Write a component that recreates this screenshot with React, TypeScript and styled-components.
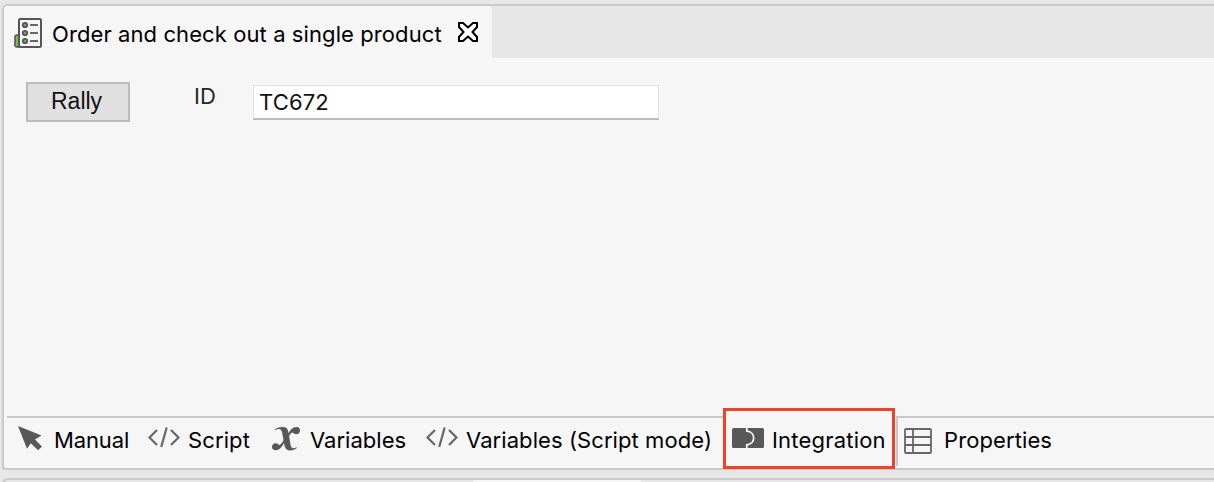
import React from "react";
import styled, { createGlobalStyle } from "styled-components";

const GlobalStyle = createGlobalStyle`
  * { box-sizing: border-box; }
  body {
    margin: 0;
    background: #e7e7e7;
    color: #000;
    font-family: Inter, "Liberation Sans", sans-serif;
    font-size: 22px;
    overflow: hidden;
  }
`;

const Workbench = styled.div`
  display: flex;
  flex-direction: column;
  gap: 8px;
  width: 1214px;
  height: 482px;
  padding: 4px 0 0 2px;
  overflow: hidden;
`;

const Panel = styled.main`
  display: flex;
  flex-direction: column;
  flex: none;
  height: 466px;
  background: #f6f6f6;
  border: 2px solid #c9c9c9;
  border-right: 0;
  border-radius: 6px 0 0 4px;
`;

const Header = styled.header`
  display: flex;
  height: 52px;
  background: #e7e7e7;
  border-top-left-radius: 4px;
`;

const EditorTab = styled.div`
  display: flex;
  align-items: flex-start;
  width: 488px;
  padding-left: 10px;
  background: #f6f6f6;
  border-radius: 4px 4px 0 0;
`;

const Text = styled.span<{ $width: number; $spacing: number }>`
  flex: none;
  width: ${(p) => p.$width}px;
  line-height: 28px;
  letter-spacing: ${(p) => p.$spacing}px;
  white-space: nowrap;
`;

const Title = styled(Text)`
  margin: 14px 16px 0 10px;
`;

const Icon = styled.svg<{ $top: number }>`
  display: block;
  flex: none;
  margin-top: ${(p) => p.$top}px;
`;

const Form = styled.section`
  display: flex;
  align-items: flex-start;
  flex: 1;
  padding: 24px 0 0 22px;
`;

const RallyButton = styled.button`
  width: 104px;
  height: 40px;
  padding: 0 0 2px 23px;
  border: 2px solid #bcbcbc;
  background: #e0e0e0;
  color: #111;
  font: 23px/34px "Liberation Sans", Arial, sans-serif;
  text-align: left;
`;

const FieldLabel = styled.label`
  width: 59px;
  margin: 0 0 0 64px;
  color: #262626;
  line-height: 28px;
`;

const Field = styled.input`
  width: 406px;
  height: 35px;
  margin-top: 3px;
  padding: 0 5px;
  border: 1px solid #dfdfdf;
  border-bottom: 2px solid #bdbdbd;
  border-radius: 0;
  outline: 0;
  background: #fff;
  color: #111;
  font: 22px Inter, sans-serif;
  letter-spacing: 0.15px;
`;

const TabBar = styled.nav`
  display: flex;
  height: 52px;
  margin-left: 3px;
  border-top: 2px solid #c9c9c9;
`;

const Tab = styled.div<{ $width: number; $left: number; $gap: number }>`
  display: flex;
  align-items: flex-start;
  flex: none;
  gap: ${(p) => p.$gap}px;
  width: ${(p) => p.$width}px;
  height: 50px;
  padding-left: ${(p) => p.$left}px;
`;

const TabText = styled(Text)`
  margin-top: 8px;
`;

const SelectedTab = styled(Tab)`
  position: relative;
  margin-top: -2px;
  padding-top: 2px;
  background: #f6f6f6;
  border-right: 2px solid #c9c9c9;
`;

const Highlight = styled.div`
  position: absolute;
  left: 0;
  top: -8px;
  width: 172px;
  height: 61px;
  border: 3px solid #ef4328;
`;

const LowerPanel = styled.div`
  flex: none;
  height: 20px;
  border: 2px solid #c9c9c9;
  border-right: 0;
  border-radius: 6px 0 0 0;
`;

const LowerTab = styled.div`
  width: 172px;
  height: 18px;
  margin-left: 467px;
  background: #f6f6f6;
  border-radius: 5px 5px 0 0;
`;

const TestCaseIcon = () => (
  <Icon $top={12} width="28" height="30" viewBox="0 0 28 30" fill="none">
    <path d="M5 17H3Q1 17 1 19V27Q1 29 3 29H5Z" fill="#79bd4c" stroke="#555" strokeWidth="1.6" />
    <rect x="5" y="1" width="22" height="28" rx="1.2" stroke="#555" strokeWidth="2" fill="#f6f6f6" />
    <path d="M2 19H4V27H2Z" fill="#79bd4c" />
    {[7, 15, 23].map((y) => (
      <g key={y}>
        <circle cx="11" cy={y} r="2.2" fill="#76a559" stroke="#555" strokeWidth="1.8" />
        <path d={`M16 ${y}H24`} stroke="#666" strokeWidth="2" />
      </g>
    ))}
  </Icon>
);

const CloseIcon = () => (
  <Icon $top={16} width="20" height="20" viewBox="0 0 20 20">
    <path
      d="M1 1H5L10 5.5L15 1H19V5L14.5 10L19 15V19H15L10 14.5L5 19H1V15L5.5 10L1 5Z"
      fill="#fff"
      stroke="#000"
      strokeWidth="2"
      strokeLinejoin="miter"
    />
  </Icon>
);

const PointerIcon = () => (
  <Icon $top={8} width="25" height="26" viewBox="0 0 25 26">
    <path d="M0 0L23.5 9.5L17 13.5L24 20.5L20 24.3L12.8 17.3L9 22.7Z" fill="#585858" />
  </Icon>
);

const CodeIcon = () => (
  <Icon $top={9} width="32" height="22" viewBox="0 0 32 22" fill="none" stroke="#666" strokeWidth="2.2">
    <path d="M9 3L1.5 10.5L9 18M23 3L30.5 10.5L23 18M18.7 0.5L13.2 20" />
  </Icon>
);

const VariableIcon = () => (
  <Icon $top={8} width="30" height="26" viewBox="0 0 30 26" fill="#585858">
    <path d="M3 4.5C5 1.5 8 1 12 1C16.5 1 17.3 4.5 17.8 8.5L19.3 17.5C19.8 20.8 20.6 22.2 22.5 22.2C24 22.2 25 21.8 26.5 20.8C25 23.6 21.5 24.6 18.5 24.4C15 24.2 13.8 21.5 13.2 18L11.4 8C10.8 4.5 10 3 7.5 3C6 3 4.5 3.5 3 4.5Z" />
    <path d="M16.5 9C19 4 21.5 1 25.5 1C28 1 29.2 2.7 29 4.7C28.8 7 27.2 8.3 25.2 8.2C23.3 8.1 22.5 7 21.5 6.5C19.8 6.8 18.6 9.3 17.4 11.5Z" />
    <path d="M14.3 14.5C12 19.5 9 24.2 4.7 24.2C2.2 24.2 .9 22.7 1 20.7C1.1 18.6 2.7 17.2 4.7 17.3C6.5 17.4 7 18.8 8.3 18.9C10.2 18.5 12 15.3 13.4 12.4Z" />
  </Icon>
);

const IntegrationIcon = () => (
  <Icon $top={10} width="32" height="20" viewBox="0 0 32 20">
    <rect width="32" height="20" rx="1.5" fill="#585858" />
    <path d="M14.8 0V3.2C24 4 24 16 14.8 16.8V20" fill="none" stroke="#f6f6f6" strokeWidth="1.8" />
  </Icon>
);

const PropertiesIcon = () => (
  <Icon $top={10} width="28" height="26" viewBox="0 0 28 26" fill="none" stroke="#666" strokeWidth="1.8">
    <rect x="1" y="1" width="26" height="24" rx="1" />
    <path d="M1 9H27M1 17H27M9 1V25" />
  </Icon>
);

export default function App() {
  return (
    <>
      <GlobalStyle />
      <Workbench>
        <Panel>
          <Header>
            <EditorTab>
              <TestCaseIcon />
              <Title $width={390} $spacing={0.09}>Order and check out a single product</Title>
              <CloseIcon />
            </EditorTab>
          </Header>
          <Form>
            <RallyButton>Rally</RallyButton>
            <FieldLabel htmlFor="case-id">ID</FieldLabel>
            <Field id="case-id" defaultValue="TC672" />
          </Form>
          <TabBar>
            <Tab $width={130} $left={11} $gap={11}>
              <PointerIcon />
              <TabText $width={76} $spacing={-0.12}>Manual</TabText>
            </Tab>
            <Tab $width={122} $left={11} $gap={8}>
              <CodeIcon />
              <TabText $width={62} $spacing={0.12}>Script</TabText>
            </Tab>
            <Tab $width={156} $left={12} $gap={9}>
              <VariableIcon />
              <TabText $width={96} $spacing={0.02}>Variables</TabText>
            </Tab>
            <Tab $width={308} $left={11} $gap={8}>
              <CodeIcon />
              <TabText $width={246} $spacing={0.08}>Variables (Script mode)</TabText>
            </Tab>
            <SelectedTab $width={175} $left={9} $gap={8}>
              <IntegrationIcon />
              <TabText $width={114} $spacing={0.2}>Integration</TabText>
              <Highlight />
            </SelectedTab>
            <Tab $width={160} $left={6} $gap={12}>
              <PropertiesIcon />
              <TabText $width={108} $spacing={0.1}>Properties</TabText>
            </Tab>
          </TabBar>
        </Panel>
        <LowerPanel>
          <LowerTab />
        </LowerPanel>
      </Workbench>
    </>
  );
}
